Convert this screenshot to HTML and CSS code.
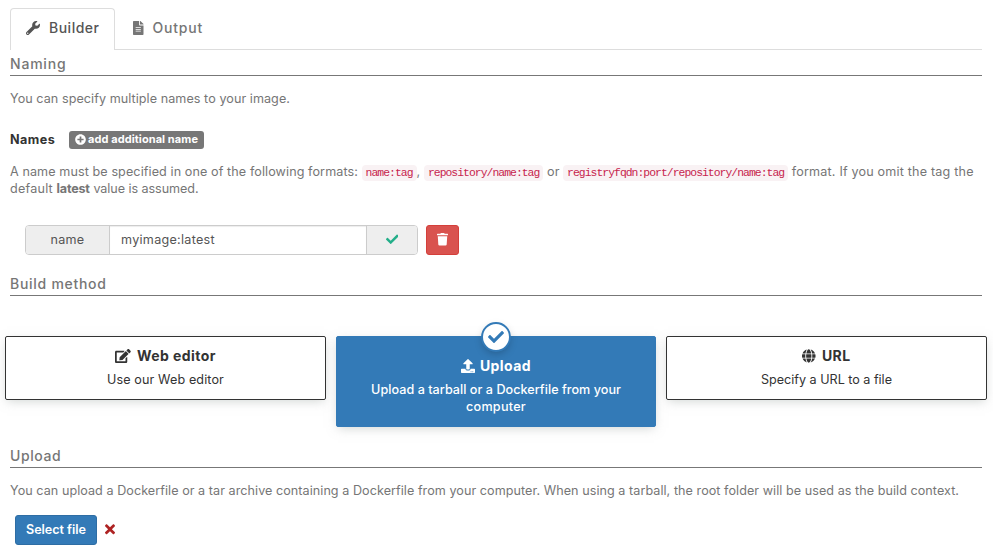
FILE: index.html
```html
<!DOCTYPE html>
<html lang="en">
<head>
<meta charset="utf-8">
<title>Build image</title>
<link rel="stylesheet" href="styles.css">
</head>
<body>
<nav class="tabs">
  <a class="tab active"><svg class="icon" width="14" height="14" viewBox="0 0 512 512"><path d="M507.73 109.1c-2.24-9.03-13.54-12.09-20.12-5.51l-74.36 74.36-67.88-11.31-11.31-67.88 74.36-74.36c6.62-6.62 3.43-17.9-5.66-20.16-47.38-11.74-99.55.91-136.58 37.93-39.64 39.64-50.55 97.1-34.05 147.2L18.74 402.76c-24.99 24.99-24.99 65.51 0 90.5 24.99 24.99 65.51 24.99 90.5 0l213.21-213.21c50.12 16.71 107.47 5.68 147.37-34.22 37.07-37.07 49.7-89.32 37.91-136.73zM64 472c-13.25 0-24-10.75-24-24 0-13.26 10.75-24 24-24s24 10.74 24 24c0 13.25-10.75 24-24 24z"/></svg><span class="tab-builder">Builder</span></a>
  <a class="tab"><svg class="icon" width="10.5" height="14" viewBox="0 0 384 512"><path d="M224 136V0H24C10.7 0 0 10.7 0 24v464c0 13.3 10.7 24 24 24h336c13.3 0 24-10.7 24-24V160H248c-13.2 0-24-10.8-24-24zm64 236c0 6.6-5.4 12-12 12H108c-6.6 0-12-5.4-12-12v-8c0-6.6 5.4-12 12-12h168c6.6 0 12 5.4 12 12v8zm0-64c0 6.6-5.4 12-12 12H108c-6.6 0-12-5.4-12-12v-8c0-6.6 5.4-12 12-12h168c6.6 0 12 5.4 12 12v8zm0-72v8c0 6.6-5.4 12-12 12H108c-6.6 0-12-5.4-12-12v-8c0-6.6 5.4-12 12-12h168c6.6 0 12 5.4 12 12zm96-114.1v6.1H256V0h6.1c6.4 0 12.5 2.5 17 7l97.9 98c4.5 4.5 7 10.6 7 16.9z"/></svg><span class="tab-output">Output</span></a>
</nav>
<main class="content">
  <h2 class="section-title naming">Naming</h2>
  <p class="intro">You can specify multiple names to your image.</p>
  <div class="names-row">
    <span class="names-label">Names</span>
    <span class="badge"><svg class="icon" width="11" height="11" viewBox="0 0 512 512"><path d="M256 8C119 8 8 119 8 256s111 248 248 248 248-111 248-248S393 8 256 8zm144 276c0 6.6-5.4 12-12 12h-92v92c0 6.6-5.4 12-12 12h-56c-6.6 0-12-5.4-12-12v-92h-92c-6.6 0-12-5.4-12-12v-56c0-6.6 5.4-12 12-12h92v-92c0-6.6 5.4-12 12-12h56c6.6 0 12 5.4 12 12v92h92c6.6 0 12 5.4 12 12v56z"/></svg>add additional name</span>
  </div>
  <p class="help">A name must be specified in one of the following formats: <code>name:tag</code>, <code>repository/name:tag</code> or <code>registryfqdn:port/repository/name:tag</code> <span class="help-end">format. If you omit the tag the</span><br><span class="default-word">default</span> <b>latest</b> <span class="assumed">value is assumed.</span></p>
  <div class="name-row">
    <div class="input-group">
      <span class="addon">name</span>
      <span class="field">myimage:latest</span>
      <span class="addon status"><svg class="icon" width="12.6" height="12.6" viewBox="0 0 512 512"><path d="M173.898 439.404l-166.4-166.4c-9.997-9.997-9.997-26.206 0-36.204l36.203-36.204c9.997-9.998 26.207-9.998 36.204 0L192 312.69 432.095 72.596c9.997-9.997 26.207-9.997 36.204 0l36.203 36.204c9.997 9.997 9.997 26.206 0 36.204l-294.4 294.401c-9.998 9.997-26.207 9.997-36.204-.001z"/></svg></span>
    </div>
    <span class="remove"><svg class="icon" width="11" height="12.6" viewBox="0 0 448 512"><path d="M432 32H312l-9.4-18.7A24 24 0 0 0 281.1 0H166.8a23.72 23.72 0 0 0-21.4 13.3L136 32H16A16 16 0 0 0 0 48v32a16 16 0 0 0 16 16h416a16 16 0 0 0 16-16V48a16 16 0 0 0-16-16zM32 128l21.2 339a48 48 0 0 0 47.9 45h245.8a48 48 0 0 0 47.9-45L416 128z"/></svg></span>
  </div>
  <h2 class="section-title method">Build method</h2>
  <div class="methods">
    <div class="method-box">
      <div class="method-title"><svg class="icon" width="15.75" height="14" viewBox="0 0 576 512"><path d="M402.6 83.2l90.2 90.2c3.8 3.8 3.8 10 0 13.8L274.4 405.6l-92.8 10.3c-12.4 1.4-22.9-9.1-21.5-21.5l10.3-92.8L388.8 83.2c3.8-3.8 10-3.8 13.8 0zm162-22.9l-48.8-48.8c-15.2-15.2-39.9-15.2-55.2 0l-35.4 35.4c-3.8 3.8-3.8 10 0 13.8l90.2 90.2c3.8 3.8 10 3.8 13.8 0l35.4-35.4c15.2-15.3 15.2-40 0-55.2zM384 346.2V448H64V128h229.8c3.2 0 6.2-1.3 8.5-3.5l40-40c7.6-7.6 2.2-20.5-8.5-20.5H48C21.5 64 0 85.5 0 112v352c0 26.5 21.5 48 48 48h352c26.5 0 48-21.5 48-48V306.2c0-10.7-12.9-16-20.5-8.5l-40 40c-2.2 2.3-3.5 5.3-3.5 8.5z"/></svg>Web editor</div>
      <p>Use our Web editor</p>
    </div>
    <div class="method-box selected">
      <span class="mark"><svg class="icon" width="16" height="16" viewBox="0 0 512 512"><path d="M173.898 439.404l-166.4-166.4c-9.997-9.997-9.997-26.206 0-36.204l36.203-36.204c9.997-9.998 26.207-9.998 36.204 0L192 312.69 432.095 72.596c9.997-9.997 26.207-9.997 36.204 0l36.203 36.204c9.997 9.997 9.997 26.206 0 36.204l-294.4 294.401c-9.998 9.997-26.207 9.997-36.204-.001z"/></svg></span>
      <div class="method-title"><svg class="icon" width="14" height="14" viewBox="0 0 512 512"><path d="M296 384h-80c-13.3 0-24-10.7-24-24V192h-87.7c-17.8 0-26.7-21.5-14.1-34.1L242.3 5.7c7.5-7.5 19.8-7.5 27.3 0l152.2 152.2c12.6 12.6 3.7 34.1-14.1 34.1H320v168c0 13.3-10.7 24-24 24zm216-8v112c0 13.3-10.7 24-24 24H24c-13.3 0-24-10.7-24-24V376c0-13.3 10.7-24 24-24h136v8c0 30.9 25.1 56 56 56h80c30.9 0 56-25.1 56-56v-8h136c13.3 0 24 10.7 24 24zm-124 88c0-11-9-20-20-20s-20 9-20 20 9 20 20 20 20-9 20-20zm64 0c0-11-9-20-20-20s-20 9-20 20 9 20 20 20 20-9 20-20z"/></svg>Upload</div>
      <p>Upload a tarball or a Dockerfile from your<br><span class="computer">computer</span></p>
    </div>
    <div class="method-box">
      <div class="method-title url"><svg class="icon" width="13.56" height="14" viewBox="0 0 496 512"><path d="M336.5 160C322 70.7 287.8 8 248 8s-74 62.7-88.5 152h177zM152 256c0 22.2 1.2 43.5 3.3 64h185.3c2.1-20.5 3.3-41.8 3.3-64s-1.2-43.5-3.3-64H155.3c-2.1 20.5-3.3 41.8-3.3 64zm324.7-96c-28.6-67.9-86.5-120.4-158-141.6 24.4 33.8 41.2 84.7 50 141.6h108zM177.2 18.4C105.8 39.6 47.8 92.1 19.3 160h108c8.7-56.9 25.5-107.8 49.9-141.6zM487.4 192H372.7c2.1 21 3.3 42.5 3.3 64s-1.2 43-3.3 64h114.6c5.5-20.5 8.6-41.8 8.6-64s-3.1-43.5-8.5-64zM120 256c0-21.5 1.2-43 3.3-64H8.6C3.2 212.5 0 233.8 0 256s3.2 43.5 8.6 64h114.6c-2-21-3.2-42.5-3.2-64zm39.5 96c14.5 89.3 48.7 152 88.5 152s74-62.7 88.5-152h-177zm159.3 141.6c71.4-21.2 129.4-73.7 158-141.6h-108c-8.8 56.9-25.6 107.8-50 141.6zM19.3 352c28.6 67.9 86.5 120.4 158 141.6-24.4-33.8-41.2-84.7-50-141.6h-108z"/></svg>URL</div>
      <p class="url-text">Specify a URL to a file</p>
    </div>
  </div>
  <h2 class="section-title upload">Upload</h2>
  <p class="upload-help">You can upload a Dockerfile or a tar archive containing a Dockerfile from your computer. When using a tarball, the root folder will be used as the build context.</p>
  <div class="upload-row">
    <span class="select">Select file</span>
    <svg class="icon times" width="10" height="14.5" viewBox="0 0 352 512"><path d="M242.72 256l100.07-100.07c12.28-12.28 12.28-32.19 0-44.48l-22.24-22.24c-12.28-12.28-32.19-12.28-44.48 0L176 189.28 75.93 89.21c-12.28-12.28-32.19-12.28-44.48 0L9.21 111.45c-12.28 12.28-12.28 32.19 0 44.48L109.28 256 9.21 356.07c-12.28 12.28-12.28 32.19 0 44.48l22.24 22.24c12.28 12.28 32.2 12.28 44.48 0L176 322.72l100.07 100.07c12.28 12.28 32.2 12.28 44.48 0l22.24-22.24c12.28-12.28 12.28-32.19 0-44.48L242.72 256z"/></svg>
  </div>
</main>
</body>
</html>
```
FILE: styles.css
```css
* { box-sizing: border-box; }
body {
  margin: 0;
  padding: 8px 11px 0 10px;
  height: 560px;
  overflow: hidden;
  background: #fff;
  color: #767676;
  font: 12.6px/17px Inter, sans-serif;
}
p { margin: 0; }
.icon { display: block; flex: none; fill: currentColor; }

.tabs { display: flex; height: 42px; border-bottom: 1px solid #ddd; }
.tab {
  display: flex;
  align-items: center;
  height: 42px;
  padding: 0 15px 3px;
  border: 1px solid transparent;
  border-bottom: 0;
  font-size: 14px;
  font-weight: 500;
}
.tab.active {
  width: 105px;
  margin-right: 2px;
  background: #fff;
  border-color: #ddd;
  border-radius: 4px 4px 0 0;
  color: #555;
}
.tab-builder { margin-left: 9px; padding-bottom: 1px; letter-spacing: .5px; }
.tab-output { margin-left: 9px; padding-bottom: 1px; letter-spacing: .8px; }

.section-title {
  margin: 0;
  height: 26px;
  padding-top: 5px;
  border-bottom: 1px solid #777;
  font-size: 14px;
  line-height: 18px;
  font-weight: 500;
  letter-spacing: .8px;
}
.section-title.upload { margin-top: 15px; letter-spacing: .6px; }
.section-title.method { margin-top: 15px; letter-spacing: .72px; }

.intro { margin-top: 14px; letter-spacing: .058px; }
.names-row { display: flex; align-items: center; height: 18px; margin-top: 24px; }
.names-label { width: 59px; padding-bottom: 2px; color: #333; font-weight: 700; letter-spacing: .45px; }
.badge {
  display: flex;
  align-items: center;
  gap: 2px;
  width: 135px;
  height: 18px;
  padding: 0 0 1px 6px;
  border-radius: 3px;
  background: #777;
  color: #fff;
  font-size: 11px;
  font-weight: 700;
  letter-spacing: .08px;
  white-space: nowrap;
}
.help { margin-top: 14px; letter-spacing: .089px; white-space: nowrap; }
.help b { letter-spacing: -.2px; }
code {
  padding: 2px 4px;
  border-radius: 4px;
  background: #f9f2f4;
  color: #c7254e;
  font: 11.4px/12px "Liberation Mono", monospace;
  letter-spacing: -.97px;
}
.help-end { letter-spacing: .18px; }
.default-word { letter-spacing: .22px; }
.assumed { letter-spacing: -.07px; }

.name-row { display: flex; gap: 8px; margin: 28px 0 0 15px; height: 30px; }
.input-group {
  display: flex;
  width: 393px;
  border: 1px solid #ccc;
  border-radius: 4px;
  overflow: hidden;
  color: #555;
  letter-spacing: .28px;
}
.addon { display: flex; align-items: center; justify-content: center; width: 83px; padding-bottom: 1px; background: #eee; }
.status { width: 50px; color: #23ae89; }
.field {
  flex: 1;
  padding: 5px 11px;
  border: solid #ccc;
  border-width: 0 1px;
  box-shadow: inset 0 1px 1px rgba(0,0,0,.075);
}
.remove {
  display: flex;
  align-items: center;
  justify-content: center;
  width: 33px;
  padding-bottom: 1px;
  border: 1px solid #d43f3a;
  border-radius: 3px;
  background: #d9534f;
  color: #fff;
}

.methods { display: flex; align-items: flex-start; gap: 10px; height: 91px; margin: 40px -6px 0 -5px; }
.method-box {
  position: relative;
  width: 321px;
  height: 64px;
  padding-top: 10px;
  border: 1px solid #333;
  border-radius: 2px;
  box-shadow: 0 3px 10px -2px rgba(161,170,166,.5);
  color: #333;
  text-align: center;
  letter-spacing: .11px;
}
.method-title {
  display: flex;
  align-items: center;
  justify-content: center;
  gap: 6px;
  height: 17px;
  margin-bottom: 7px;
  font-size: 14px;
  font-weight: 700;
  letter-spacing: .44px;
}
.url-text { letter-spacing: -.01px; }
.method-box.selected {
  width: 320px;
  height: 91px;
  padding-top: 20px;
  border-color: #337ab7;
  background: #337ab7;
  color: #fff;
  font-weight: 500;
  letter-spacing: .04px;
}
.selected .method-title { gap: 5px; }
.computer { letter-spacing: .26px; }
.mark {
  position: absolute;
  top: -15px;
  left: 144px;
  display: flex;
  align-items: center;
  justify-content: center;
  width: 30px;
  height: 30px;
  border: 2px solid #337ab7;
  border-radius: 50%;
  background: #fff;
  box-shadow: 0 3px 8px -2px rgba(0,0,0,.25);
  color: #337ab7;
}

.upload-help { margin-top: 14px; letter-spacing: .051px; white-space: nowrap; }
.upload-row { display: flex; align-items: center; gap: 8px; height: 30px; margin: 16px 0 0 5px; }
.select {
  width: 82px;
  height: 30px;
  padding-top: 5px;
  border: 1px solid #2e6da4;
  border-radius: 3px;
  background: #337ab7;
  color: #fff;
  font-weight: 600;
  line-height: 18px;
  text-align: center;
  letter-spacing: -.03px;
}
.times { margin-bottom: 2px; color: #ae2323; }
```
